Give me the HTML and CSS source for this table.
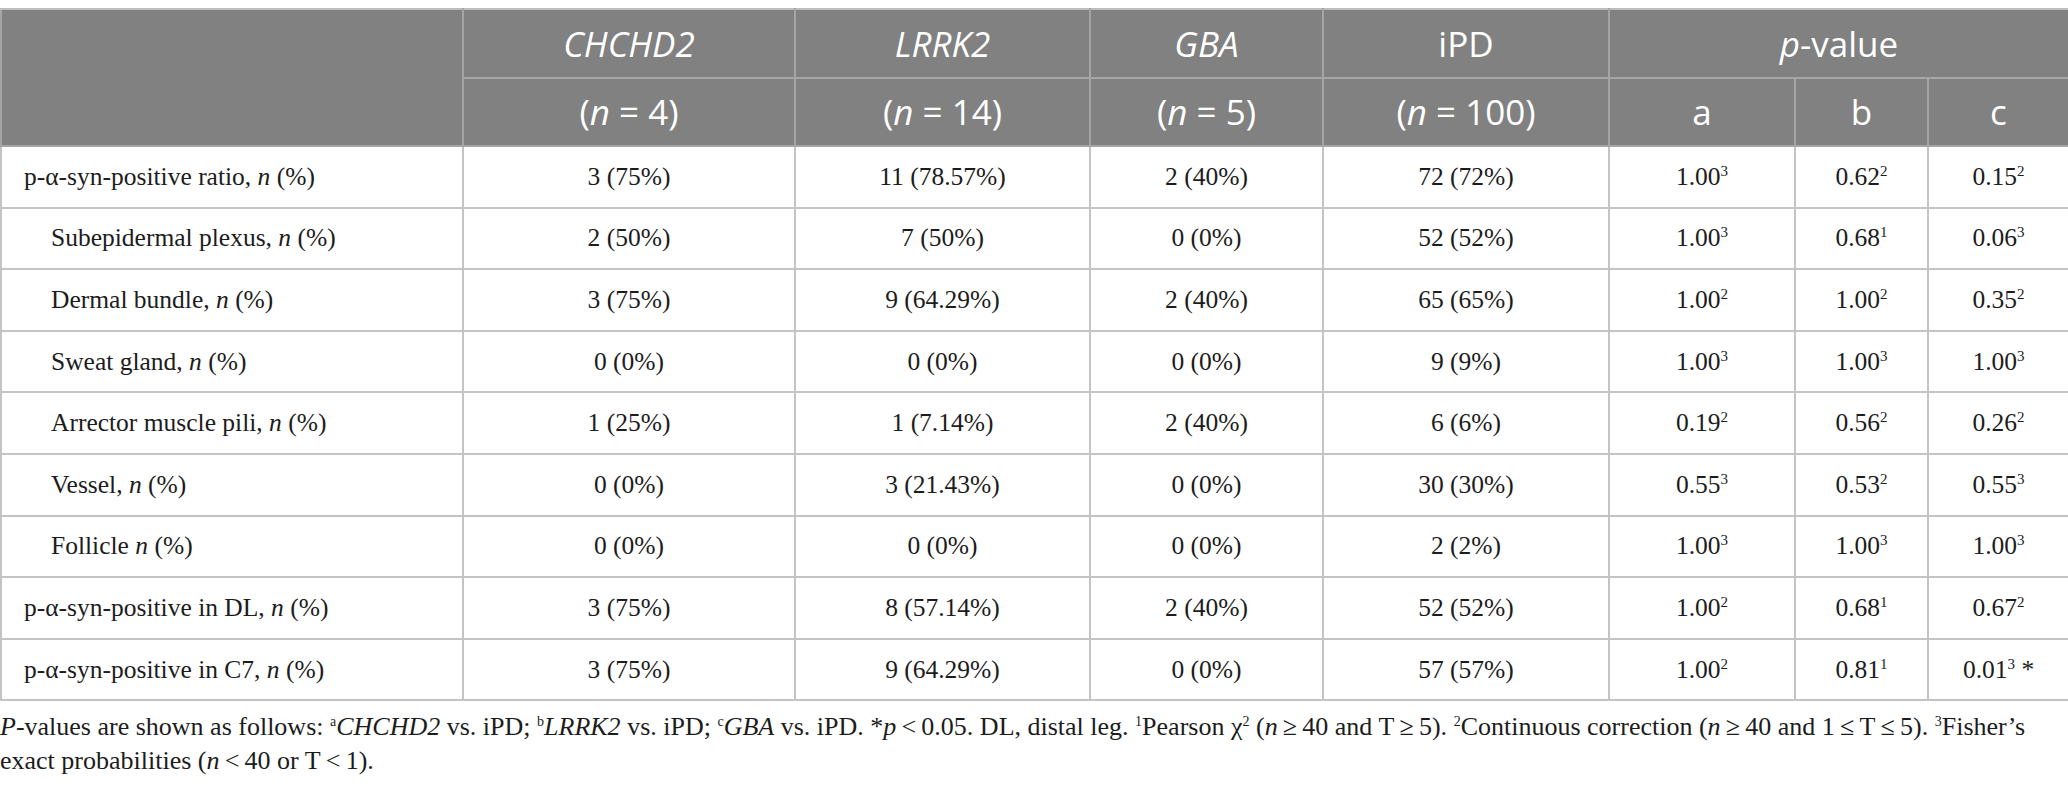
FILE: index.html
```html
<!DOCTYPE html>
<html lang="en">
<head>
    <meta charset="UTF-8">
    <meta name="viewport" content="width=device-width, initial-scale=1.0">
    <title>p-α-syn positivity by genotype</title>
    <link rel="stylesheet" href="styles.css">
</head>
<body>
    <table class="data-table">
        <colgroup>
            <col class="c-label">
            <col class="c-chchd2">
            <col class="c-lrrk2">
            <col class="c-gba">
            <col class="c-ipd">
            <col class="c-a">
            <col class="c-b">
            <col class="c-c">
        </colgroup>
        <thead>
            <tr>
                <th rowspan="2"></th>
                <th><i>CHCHD2</i></th>
                <th><i>LRRK2</i></th>
                <th><i>GBA</i></th>
                <th>iPD</th>
                <th colspan="3"><i>p</i>-value</th>
            </tr>
            <tr>
                <th>(<i>n</i> = 4)</th>
                <th>(<i>n</i> = 14)</th>
                <th>(<i>n</i> = 5)</th>
                <th>(<i>n</i> = 100)</th>
                <th>a</th>
                <th>b</th>
                <th>c</th>
            </tr>
        </thead>
        <tbody>
            <tr>
                <td class="label">p-α-syn-positive ratio, <i>n</i> (%)</td>
                <td>3 (75%)</td>
                <td>11 (78.57%)</td>
                <td>2 (40%)</td>
                <td>72 (72%)</td>
                <td>1.00<sup>3</sup></td>
                <td>0.62<sup>2</sup></td>
                <td>0.15<sup>2</sup></td>
            </tr>
            <tr>
                <td class="label sub">Subepidermal plexus, <i>n</i> (%)</td>
                <td>2 (50%)</td>
                <td>7 (50%)</td>
                <td>0 (0%)</td>
                <td>52 (52%)</td>
                <td>1.00<sup>3</sup></td>
                <td>0.68<sup>1</sup></td>
                <td>0.06<sup>3</sup></td>
            </tr>
            <tr>
                <td class="label sub">Dermal bundle, <i>n</i> (%)</td>
                <td>3 (75%)</td>
                <td>9 (64.29%)</td>
                <td>2 (40%)</td>
                <td>65 (65%)</td>
                <td>1.00<sup>2</sup></td>
                <td>1.00<sup>2</sup></td>
                <td>0.35<sup>2</sup></td>
            </tr>
            <tr>
                <td class="label sub">Sweat gland, <i>n</i> (%)</td>
                <td>0 (0%)</td>
                <td>0 (0%)</td>
                <td>0 (0%)</td>
                <td>9 (9%)</td>
                <td>1.00<sup>3</sup></td>
                <td>1.00<sup>3</sup></td>
                <td>1.00<sup>3</sup></td>
            </tr>
            <tr>
                <td class="label sub">Arrector muscle pili, <i>n</i> (%)</td>
                <td>1 (25%)</td>
                <td>1 (7.14%)</td>
                <td>2 (40%)</td>
                <td>6 (6%)</td>
                <td>0.19<sup>2</sup></td>
                <td>0.56<sup>2</sup></td>
                <td>0.26<sup>2</sup></td>
            </tr>
            <tr>
                <td class="label sub">Vessel, <i>n</i> (%)</td>
                <td>0 (0%)</td>
                <td>3 (21.43%)</td>
                <td>0 (0%)</td>
                <td>30 (30%)</td>
                <td>0.55<sup>3</sup></td>
                <td>0.53<sup>2</sup></td>
                <td>0.55<sup>3</sup></td>
            </tr>
            <tr>
                <td class="label sub">Follicle <i>n</i> (%)</td>
                <td>0 (0%)</td>
                <td>0 (0%)</td>
                <td>0 (0%)</td>
                <td>2 (2%)</td>
                <td>1.00<sup>3</sup></td>
                <td>1.00<sup>3</sup></td>
                <td>1.00<sup>3</sup></td>
            </tr>
            <tr>
                <td class="label">p-α-syn-positive in DL, <i>n</i> (%)</td>
                <td>3 (75%)</td>
                <td>8 (57.14%)</td>
                <td>2 (40%)</td>
                <td>52 (52%)</td>
                <td>1.00<sup>2</sup></td>
                <td>0.68<sup>1</sup></td>
                <td>0.67<sup>2</sup></td>
            </tr>
            <tr>
                <td class="label">p-α-syn-positive in C7, <i>n</i> (%)</td>
                <td>3 (75%)</td>
                <td>9 (64.29%)</td>
                <td>0 (0%)</td>
                <td>57 (57%)</td>
                <td>1.00<sup>2</sup></td>
                <td>0.81<sup>1</sup></td>
                <td>0.01<sup>3</sup> *</td>
            </tr>
        </tbody>
    </table>

    <p class="footnote">
        <i>P</i>-values are shown as follows: <sup>a</sup><i>CHCHD2</i> vs. iPD; <sup>b</sup><i>LRRK2</i> vs. iPD; <sup>c</sup><i>GBA</i> vs. iPD. *<i>p</i>&#8201;&lt;&#8201;0.05. DL, distal leg. <sup>1</sup>Pearson χ<sup>2</sup> (<i>n</i>&#8201;≥&#8201;40 and T&#8201;≥&#8201;5). <sup>2</sup>Continuous correction (<i>n</i>&#8201;≥&#8201;40 and 1&#8201;≤&#8201;T&#8201;≤&#8201;5). <sup>3</sup>Fisher’s exact probabilities (<i>n</i>&#8201;&lt;&#8201;40 or T&#8201;&lt;&#8201;1).
    </p>
</body>
</html>
```

FILE: styles.css
```css
body {
    margin: 0;
    padding: 8px 0 0 0;
    background: #fff;
    color: #1c1c1c;
    font-family: "Liberation Serif", "Times New Roman", serif;
}
.data-table {
    width: 2068px;
    border-collapse: collapse;
    table-layout: fixed;
}
.c-label { width: 462px; }
.c-chchd2 { width: 332px; }
.c-lrrk2 { width: 295px; }
.c-gba { width: 233px; }
.c-ipd { width: 286px; }
.c-a { width: 186px; }
.c-b { width: 133px; }
.c-c { width: 141px; }

.data-table th {
    height: 66.5px;
    padding: 0;
    background-color: #808180;
    color: #fff;
    font-family: "Open Sans", sans-serif;
    font-weight: 400;
    font-size: 35px;
    text-align: center;
    border: 2px solid #a4a5a4;
    border-top-color: #bdbdbd;
}
.data-table td {
    height: 59.6px;
    padding: 0;
    font-size: 25.5px;
    text-align: center;
    border: 2px solid #c4c4c4;
}
.data-table td.label {
    text-align: left;
    padding-left: 22px;
}
.data-table td.sub {
    padding-left: 49px;
}
sup {
    font-size: 15px;
    line-height: 0;
    vertical-align: 9px;
}
.footnote {
    margin: 9px 0 0 0;
    font-size: 26px;
    line-height: 34px;
}
.footnote sup {
    font-size: 14px;
}
```
